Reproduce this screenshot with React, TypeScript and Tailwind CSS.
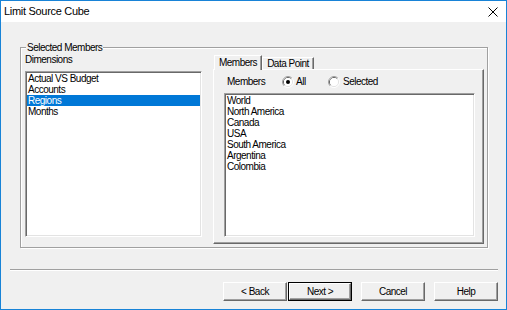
import React from "react";

function Radio({ checked }: { checked: boolean }) {
  return (
    <svg width="12" height="12" viewBox="0 0 12 12" className="shrink-0">
      <path d="M2.11 9.89 A5.5 5.5 0 0 1 9.89 2.11" fill="none" stroke="#a0a0a0" />
      <path d="M9.89 2.11 A5.5 5.5 0 0 1 2.11 9.89" fill="none" stroke="#ffffff" />
      <path d="M2.82 9.18 A4.5 4.5 0 0 1 9.18 2.82" fill="none" stroke="#696969" />
      <path d="M9.18 2.82 A4.5 4.5 0 0 1 2.82 9.18" fill="none" stroke="#e3e3e3" />
      <circle cx="6" cy="6" r="4" fill="#ffffff" />
      {checked && <circle cx="6" cy="6" r="2" fill="#000000" />}
    </svg>
  );
}

function ListBox({
  items,
  selected,
  className,
}: {
  items: string[];
  selected?: number;
  className: string;
}) {
  return (
    <div
      className={
        "bg-white border border-t-[#a0a0a0] border-l-[#a0a0a0] border-r-white border-b-white shadow-[inset_1px_1px_0_#696969,inset_-1px_-1px_0_#e3e3e3] p-[1px] " +
        className
      }
    >
      {items.map((it, i) => (
        <div
          key={it}
          className={
            i === selected
              ? "h-[11px] leading-[11px] pl-[1px] whitespace-nowrap bg-[#0078d7] text-white"
              : "h-[11px] leading-[11px] pl-[1px] whitespace-nowrap text-black"
          }
        >
          {it}
        </div>
      ))}
    </div>
  );
}

function Btn({ label, def, className }: { label: string; def?: boolean; className?: string }) {
  const face = (
    <div className="w-full h-full flex items-center justify-center border border-t-white border-l-white border-r-[#696969] border-b-[#696969] shadow-[inset_-1px_-1px_0_#a0a0a0] leading-[12px]">
      {label}
    </div>
  );
  return (
    <div className={"w-[64px] h-[19px] " + (className ?? "")}>
      {def ? <div className="w-full h-full border border-black">{face}</div> : face}
    </div>
  );
}

export default function App() {
  return (
    <div className="w-[507px] h-[310px] border border-[#1883d7] bg-[#f0f0f0] flex flex-col text-[10px] tracking-[-0.5px] text-black font-['Liberation_Sans',Arial,sans-serif] overflow-hidden">
      <div className="h-[21px] shrink-0 bg-white flex items-center justify-between pl-[3px] pr-[8px]">
        <span className="text-[11px] tracking-[-0.3px] leading-[13px]">Limit Source Cube</span>
        <svg width="10" height="10" viewBox="0 0 10 10">
          <path d="M0.5 0.5L9.5 9.5M9.5 0.5L0.5 9.5" stroke="#000" strokeWidth="1" />
        </svg>
      </div>

      <div className="flex-1 flex flex-col">
        <fieldset className="mt-[19px] ml-[19px] w-[468px] h-[207px] min-w-0 border border-[#a0a0a0] shadow-[inset_1px_1px_0_#ffffff,1px_1px_0_#ffffff]">
          <legend className="ml-[5px] px-[1px] bg-[#f0f0f0] leading-[13px]">Selected Members</legend>
          <div className="flex pl-[4px]">
            <div className="w-[177px] flex flex-col">
              <div className="h-[12px] leading-[12px]">Dimensions</div>
              <ListBox
                items={["Actual VS Budget", "Accounts", "Regions", "Months"]}
                selected={2}
                className="mt-[5px] h-[166px]"
              />
            </div>

            <div className="ml-[11px] mt-[1px] w-[271px] flex flex-col">
              <div className="relative z-10 flex items-end h-[14px] pl-[1px]">
                <div className="h-[15px] -mb-[1px] w-[48px] flex items-center justify-center bg-[#f0f0f0] border-t border-l border-r border-t-white border-l-white border-r-[#696969] shadow-[inset_-1px_0_0_#a0a0a0] leading-[12px]">
                  Members
                </div>
                <div className="h-[12px] w-[52px] flex items-center justify-center border-t border-l border-r border-t-white border-l-white border-r-[#696969] shadow-[inset_-1px_0_0_#a0a0a0] leading-[12px]">
                  Data Point
                </div>
              </div>
              <div className="h-[175px] border border-t-white border-l-white border-r-[#696969] border-b-[#696969] shadow-[inset_-1px_-1px_0_#a0a0a0] flex flex-col">
                <div className="flex items-center h-[12px] mt-[6px] pl-[13px]">
                  <span className="w-[55px] leading-[12px]">Members</span>
                  <div className="w-[46px] flex items-center">
                    <Radio checked />
                    <span className="ml-[2px] leading-[12px]">All</span>
                  </div>
                  <div className="flex items-center">
                    <Radio checked={false} />
                    <span className="ml-[3px] leading-[12px]">Selected</span>
                  </div>
                </div>
                <ListBox
                  items={[
                    "World",
                    "North America",
                    "Canada",
                    "USA",
                    "South America",
                    "Argentina",
                    "Colombia",
                  ]}
                  className="mt-[5px] ml-[10px] w-[251px] h-[144px]"
                />
              </div>
            </div>
          </div>
        </fieldset>

        <div className="mt-[21px] ml-[9px] w-[488px] h-[2px] border-t border-b border-t-[#a0a0a0] border-b-white" />

        <div className="mt-[11px] flex justify-end pr-[8px]">
          <Btn label="< Back" />
          <Btn label="Next >" def className="ml-[1px]" />
          <Btn label="Cancel" className="ml-[9px]" />
          <Btn label="Help" className="ml-[9px]" />
        </div>
      </div>
    </div>
  );
}
